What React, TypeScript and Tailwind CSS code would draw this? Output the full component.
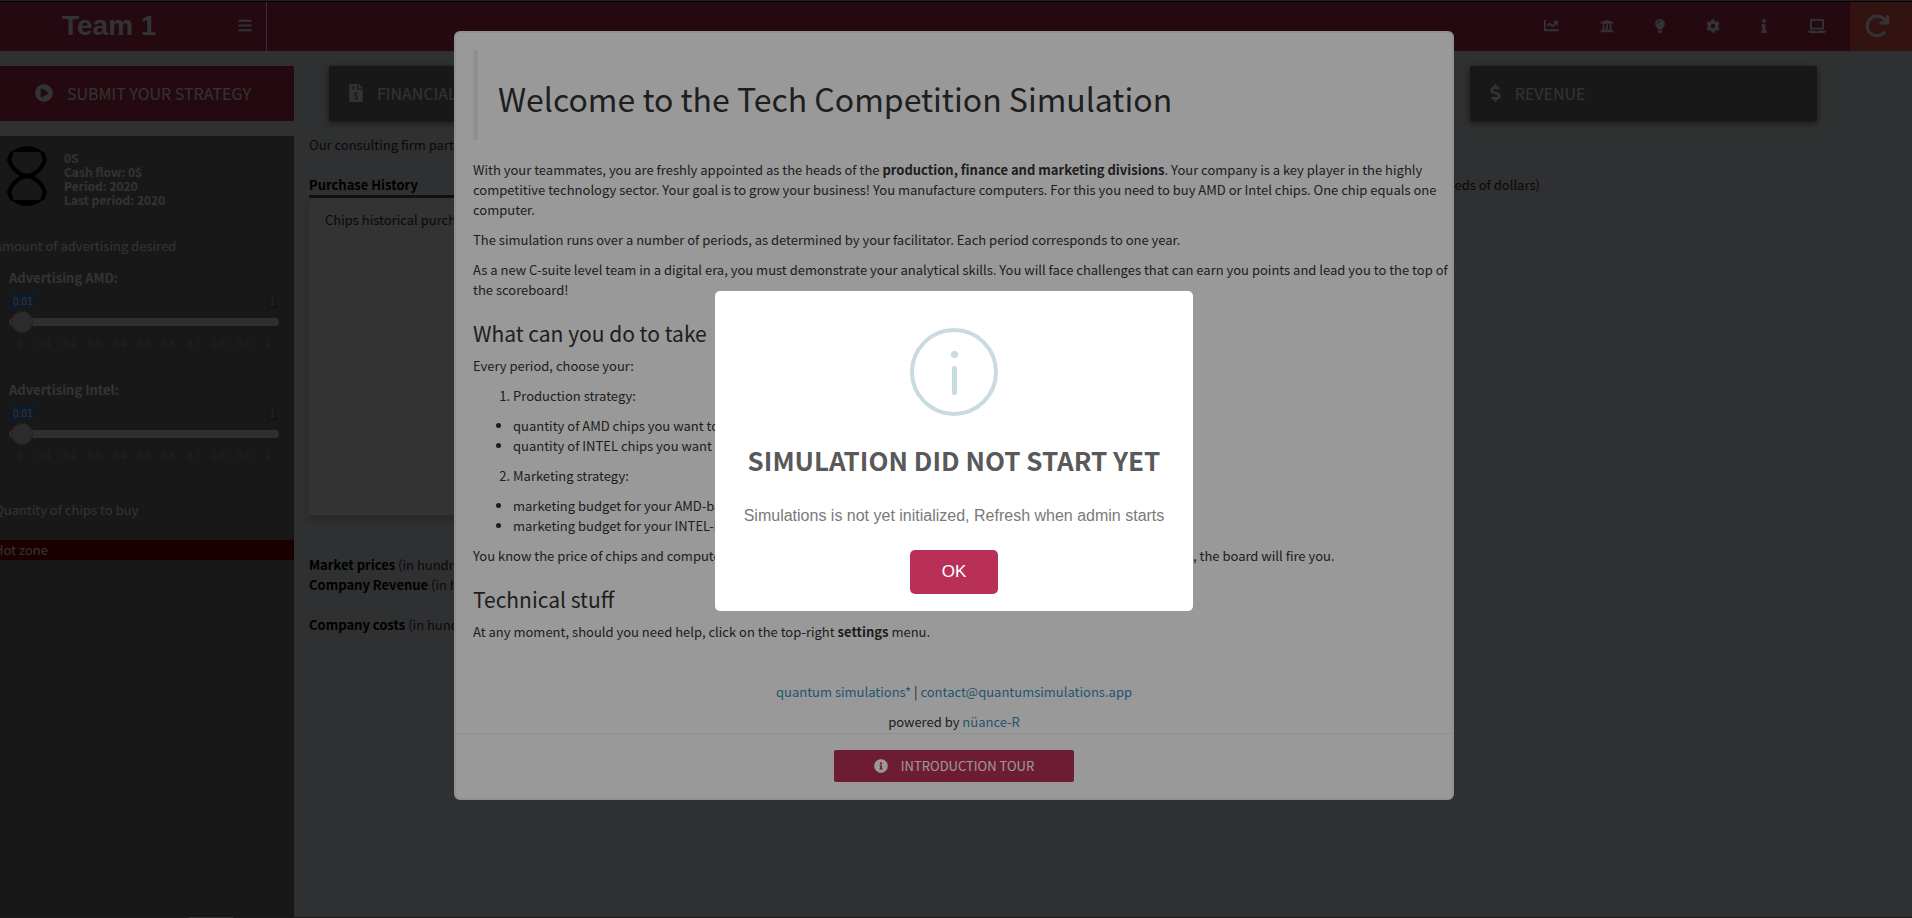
import { useState, type ReactNode } from 'react';
import {
  FaBars,
  FaChartLine,
  FaCog,
  FaDollarSign,
  FaFileInvoiceDollar,
  FaInfo,
  FaInfoCircle,
  FaLaptop,
  FaLightbulb,
  FaPlayCircle,
  FaUniversity,
} from 'react-icons/fa';
import { FaArrowRotateRight } from 'react-icons/fa6';

const ticks = ['0', '0.1', '0.2', '0.3', '0.4', '0.5', '0.6', '0.7', '0.8', '0.9', '1'];

const navItems = [
  { label: 'Charts', icon: <FaChartLine className="h-[15px] w-[15px]" /> },
  { label: 'Bank', icon: <FaUniversity className="h-[14px] w-[14px]" /> },
  { label: 'Ideas', icon: <FaLightbulb className="h-[14px] w-[10px]" /> },
  { label: 'Settings', icon: <FaCog className="h-[14px] w-[14px]" /> },
  { label: 'Information', icon: <FaInfo className="h-[14px] w-[6px]" /> },
  { label: 'Display', icon: <FaLaptop className="h-[14px] w-[18px]" /> },
];

const Header = () => (
  <header className="flex h-[50px] shrink-0 border-t border-black bg-[#b82f57] text-white">
    <div className="flex w-[267px] shrink-0 items-center border-r border-white pb-0.5">
      <span className="pl-[62px] font-['Liberation_Sans',Arial,sans-serif] text-[28px] font-bold whitespace-nowrap">Team 1</span>
      <button aria-label="Toggle sidebar" className="mr-[14px] ml-auto">
        <FaBars className="h-[15px] w-[14px]" />
      </button>
    </div>
    <nav className="ml-auto flex items-center">
      <div className="mr-6 flex items-center gap-[41px] pb-0.5">
        {navItems.map((item) => (
          <button key={item.label} aria-label={item.label}>
            {item.icon}
          </button>
        ))}
      </div>
      <button aria-label="Refresh" className="flex h-full w-[62px] items-center bg-[#ff5f5f] pb-0.5 pl-[14px] text-[26px]">
        <FaArrowRotateRight />
      </button>
    </nav>
  </header>
);

const AdSlider = ({ id, label }: { id: string; label: string }) => {
  const [value, setValue] = useState(0.01);

  return (
    <div className="h-28 pr-[15px] pl-[9px]">
      <label htmlFor={id} className="block h-5 font-bold leading-5">
        {label}
      </label>
      <div className="mt-[5px] flex justify-between px-px text-[10px] leading-4">
        <span className="rounded-[3px] bg-[#428bca] px-[3px]">{value}</span>
        <span className="rounded-[3px] bg-[#737373] px-[3px] text-[#c0c0c0]">1</span>
      </div>
      <input
        id={id}
        type="range"
        min={0}
        max={1}
        step={0.01}
        value={value}
        onChange={(e) => setValue(Number(e.target.value))}
        className="mt-[9px] block h-2 w-full appearance-none rounded-[4px] bg-[#eee] [&::-webkit-slider-thumb]:size-[22px] [&::-webkit-slider-thumb]:appearance-none [&::-webkit-slider-thumb]:rounded-full [&::-webkit-slider-thumb]:border [&::-webkit-slider-thumb]:border-[#ababab] [&::-webkit-slider-thumb]:bg-[#dedede]"
      />
      <div className="mt-3 flex justify-between text-[9px] leading-3 text-[#a8a8a8]">
        {ticks.map((t) => (
          <span key={t} className="w-[22px] text-center">
            {t}
          </span>
        ))}
      </div>
    </div>
  );
};

const Hourglass = () => (
  <svg viewBox="0 0 40 60" className="h-[60px] w-10" fill="none" stroke="#000">
    <path d="M4 6 Q20 -6 36 6 Z" fill="#000" stroke="none" />
    <path d="M4 54 Q20 66 36 54 Z" fill="#000" stroke="none" />
    <path d="M5 6 L2 14 C5 23 12 29 20 30 C28 29 35 23 38 14 L35 6" strokeWidth="4" />
    <path d="M5 54 L2 46 C5 37 12 31 20 30 C28 31 35 37 38 46 L35 54" strokeWidth="4" />
  </svg>
);

const Sidebar = () => (
  <aside className="flex w-[294px] shrink-0 flex-col overflow-hidden pt-[15px] text-white">
    <button className="flex h-[55px] shrink-0 items-center bg-[#b82f57] pb-0.5 pl-[35px] text-base">
      <FaPlayCircle className="mr-[14px] text-[18px]" />
      SUBMIT YOUR STRATEGY
    </button>
    <div className="mt-[15px] flex-1 bg-[#7d7d7d]">
      <div className="flex h-[100px] pt-[10px] pl-[7px]">
        <Hourglass />
        <div className="ml-[17px] pt-[5px] text-xs/[14px] font-bold">
          <p>0S</p>
          <p>Cash flow: 0$</p>
          <p>Period: 2020</p>
          <p>Last period: 2020</p>
        </div>
      </div>
      <p className="-ml-[6px] mb-3 leading-5">Amount of advertising desired</p>
      <AdSlider id="ad-amd" label="Advertising AMD:" />
      <AdSlider id="ad-intel" label="Advertising Intel:" />
      <p className="-ml-[6px] mt-2 leading-5">Quantity of chips to buy</p>
      <p className="mt-5 bg-[#8b0000] leading-5">
        <span className="-ml-[6px]">Hot zone</span>
      </p>
    </div>
  </aside>
);

const TabButton = ({ icon, children, className }: { icon: ReactNode; children: ReactNode; className?: string }) => (
  <button className={`flex h-[55px] items-center gap-[14px] bg-[#7d7d7d] pb-0.5 pl-5 text-base text-white shadow-[0_2px_6px_rgba(0,0,0,0.5)] ${className ?? ''}`}>
    {icon}
    {children}
  </button>
);

const Content = () => (
  <main className="flex-1 overflow-hidden px-[15px] pt-[15px] text-[#333]">
    <div className="mr-20 ml-5 grid grid-cols-4 gap-[33px]">
      <TabButton icon={<FaFileInvoiceDollar className="h-[18px] w-[14px]" />}>FINANCIAL</TabButton>
      <TabButton className="col-start-4" icon={<FaDollarSign className="h-[18px] w-[11px]" />}>
        REVENUE
      </TabButton>
    </div>
    <p className="mt-[14px] leading-5">Our consulting firm partners</p>
    <div className="mt-5 grid grid-cols-[600px_auto] items-start">
      <section>
        <h4 className="h-[23px] border-b-[3px] border-[#555] leading-5 font-bold text-black">Purchase History</h4>
        <div className="h-[317px] bg-white pt-3 pl-4 leading-5 shadow-[0_6px_6px_rgba(0,0,0,0.15)]">Chips historical purchases</div>
      </section>
      <p className="pl-[490px] leading-5 whitespace-nowrap">(in hundreds of dollars)</p>
    </div>
    <div className="mt-10 leading-5">
      <p>
        <b className="text-black">Market prices</b> (in hundreds of dollars)
      </p>
      <p>
        <b className="text-black">Company Revenue</b> (in hundreds of dollars)
      </p>
      <p className="mt-5">
        <b className="text-black">Company costs</b> (in hundreds of dollars)
      </p>
    </div>
  </main>
);

const WelcomeModal = () => (
  <div className="absolute inset-0 bg-black/[0.667] pr-1">
    <section role="dialog" aria-label="Welcome" className="mx-auto mt-[31px] w-[1000px] rounded-md border-2 border-[#f2f2f2] bg-white text-[#333]">
      <div className="px-[17px] pt-[17px] leading-5">
        <blockquote className="mb-5 flex h-[90px] items-center border-l-[5px] border-[#eee] pt-1.5 pl-5">
          <h1 className="text-[32px] leading-10">Welcome to the Tech Competition Simulation</h1>
        </blockquote>
        <p className="-mr-4 mb-[10px]">
          With your teammates, you are freshly appointed as the heads of the <b>production, finance and marketing divisions</b>. Your company is a key player in the highly competitive technology sector. Your goal is to grow your business! You manufacture computers. For this you need to buy AMD or Intel chips. One chip equals one computer.
        </p>
        <p className="mb-[10px]">The simulation runs over a number of periods, as determined by your facilitator. Each period corresponds to one year.</p>
        <p className="-mr-4">
          As a new C-suite level team in a digital era, you must demonstrate your analytical skills. You will face challenges that can earn you points and lead you to the top of the scoreboard!
        </p>
        <h3 className="mt-5 mb-[10px] text-[21px] leading-[26px]">What can you do to take</h3>
        <p>Every period, choose your:</p>
        <ol className="my-[10px] list-decimal pl-10">
          <li>Production strategy:</li>
        </ol>
        <ul className="my-[10px] list-disc pl-10">
          <li>quantity of AMD chips you want to buy</li>
          <li>quantity of INTEL chips you want to buy</li>
        </ul>
        <ol start={2} className="my-[10px] list-decimal pl-10">
          <li>Marketing strategy:</li>
        </ol>
        <ul className="my-[10px] list-disc pl-10">
          <li>marketing budget for your AMD-based computers</li>
          <li>marketing budget for your INTEL-based computers</li>
        </ul>
        <p className="flex">
          <span className="w-[720px]">You know the price of chips and computers. Plan your budgets with care: if you go bankrupt</span>
          <span>, the board will fire you.</span>
        </p>
        <h3 className="mt-5 mb-[10px] text-[21px] leading-[26px]">Technical stuff</h3>
        <p>
          At any moment, should you need help, click on the top-right <b>settings</b> menu.
        </p>
        <div className="mt-10 text-center">
          <p className="mb-[10px]">
            <a href="#home" className="text-[#3c8dbc]">quantum simulations*</a> |{' '}
            <a href="#contact" className="text-[#3c8dbc]">contact@quantumsimulations.app</a>
          </p>
          <p className="mb-px">
            powered by <a href="#nuance" className="text-[#3c8dbc]">nüance-R</a>
          </p>
        </div>
      </div>
      <footer className="flex justify-center border-t border-[#f0f0f0] py-4">
        <button className="flex h-8 w-60 items-center justify-center gap-[13px] rounded-[2px] bg-[#b82f57] text-white">
          <FaInfoCircle className="text-[14px]" />
          INTRODUCTION TOUR
        </button>
      </footer>
    </section>
  </div>
);

const Alert = () => (
  <div className="absolute inset-0 flex items-center justify-center bg-black/40 pr-1 pb-4">
    <section role="alertdialog" aria-labelledby="alert-title" className="flex h-80 w-[478px] flex-col items-center rounded-[5px] bg-white pt-[37px]">
      <svg viewBox="0 0 88 88" className="size-[88px] shrink-0" fill="#c9dae1">
        <circle cx="44" cy="44" r="42" fill="none" stroke="#c9dae1" strokeWidth="4" />
        <circle cx="44.5" cy="26.5" r="3.5" />
        <rect x="42" y="38" width="5" height="29" rx="2" />
      </svg>
      <h2 id="alert-title" className="mt-6 text-[26px] leading-10 font-semibold whitespace-nowrap text-[#595959]">SIMULATION DID NOT START YET</h2>
      <p className="mt-6 font-['Liberation_Sans',Arial,sans-serif] text-base leading-6 text-[#797979]">
        Simulations is not yet initialized, Refresh when admin starts
      </p>
      <button className="mt-[22px] h-11 w-[88px] rounded-[5px] bg-[#b82f57] font-['Liberation_Sans',Arial,sans-serif] text-[17px] text-white">OK</button>
    </section>
  </div>
);

const App = () => (
  <div className="relative flex h-screen flex-col overflow-hidden bg-[#ecf0f5] font-['Noto_Sans_CJK_SC',sans-serif] text-[13px]">
    <div className="h-px shrink-0 bg-[#aaa]" />
    <Header />
    <div className="flex min-h-0 flex-1">
      <Sidebar />
      <Content />
    </div>
    <div className="h-px shrink-0 bg-[#9a8a90]">
      <div className="ml-[189px] h-px w-11 bg-white" />
    </div>
    <WelcomeModal />
    <Alert />
  </div>
);

export default App;
